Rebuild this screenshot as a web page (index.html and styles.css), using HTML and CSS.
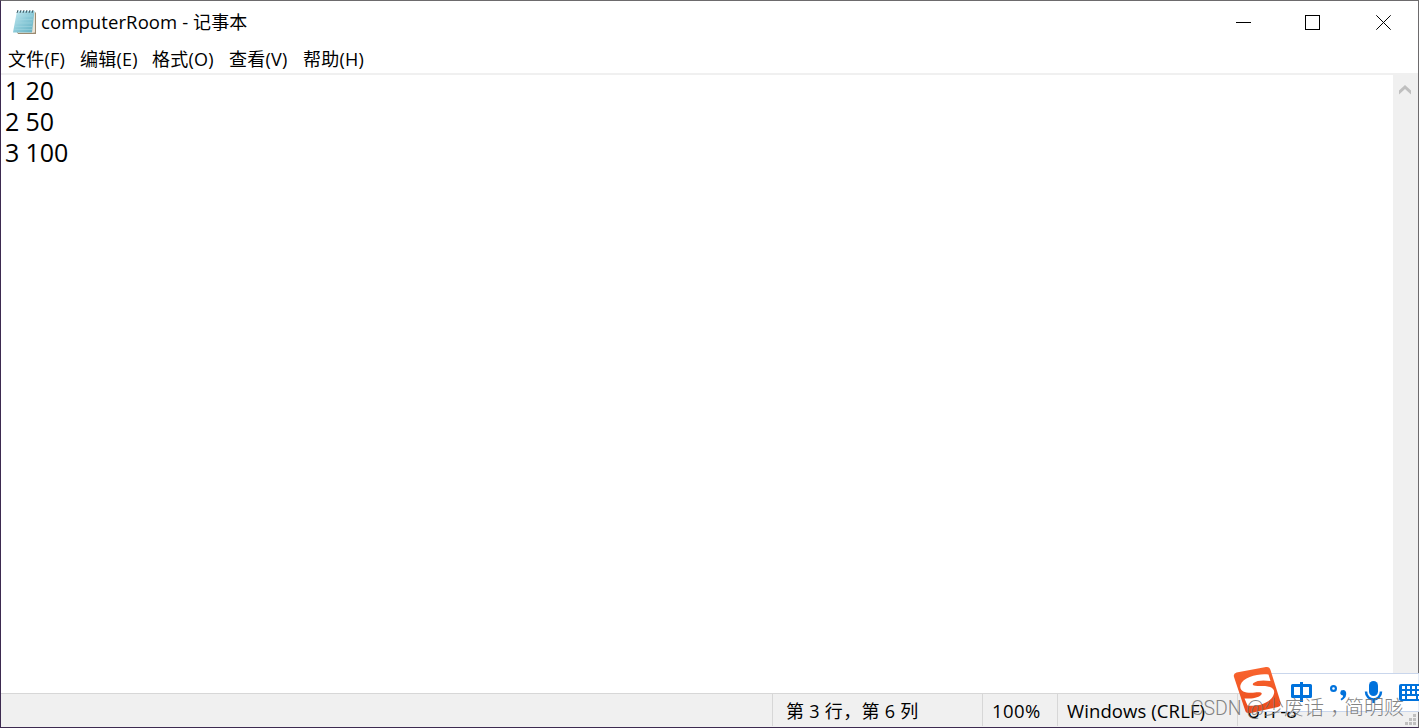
FILE: index.html
```html
<!DOCTYPE html>
<html lang="zh-CN">
<head>
    <meta charset="UTF-8">
    <meta name="viewport" content="width=device-width, initial-scale=1.0">
    <title>computerRoom - 记事本</title>
    <link rel="stylesheet" href="styles.css">
</head>
<body>
    <div class="window">
        <div class="title-bar">
            <svg class="app-icon" width="25" height="26" viewBox="0 0 25 26">
                <defs>
                    <linearGradient id="paper" x1="0" y1="0" x2="1" y2="1">
                        <stop offset="0" stop-color="#c9ebf2"/>
                        <stop offset="0.5" stop-color="#8dcbd9"/>
                        <stop offset="1" stop-color="#62afc1"/>
                    </linearGradient>
                </defs>
                <path d="M6 3.5H24V25H6L5 23Z" fill="#9b8a70"/>
                <path d="M6 3H23V23.5L20 24H6Z" fill="#e9e3d6"/>
                <path d="M5 2H22.5L20 23.5H1Z" fill="url(#paper)"/>
                <path d="M4.5 7H21M4 10.500H20.500M3.500 14H20M3 17.500H20M2.500 20.500H20" stroke="#a9d9e3" stroke-width="0.5"/>
                <path d="M6 1L5 4M9 1L8 4M12 1L11 4M15 1L14 4M18 1L17 4M21 1L20 4" stroke="#45606a" stroke-width="1"/>
            </svg>
            <span class="title"><span class="title-name">computerRoom -</span> 记事本</span>
            <div class="controls">
                <svg width="15" height="16" viewBox="0 0 15 16"><path d="M0 8.500H15" stroke="#000"/></svg>
                <svg width="15" height="16" viewBox="0 0 15 16"><rect x="0.500" y="1.500" width="14" height="14" fill="none" stroke="#000"/></svg>
                <svg width="15" height="16" viewBox="0 0 15 16"><path d="M0.300 1.300L14.700 15.700M14.700 1.300L0.300 15.700" stroke="#000"/></svg>
            </div>
        </div>
        <div class="menu">
            <span class="menu-file">文件(F)</span>
            <span class="menu-edit">编辑(E)</span>
            <span class="menu-format">格式(O)</span>
            <span class="menu-view">查看(V)</span>
            <span class="menu-help">帮助(H)</span>
        </div>
        <div class="editor">
            <pre class="text">1 20
2 50
3 100</pre>
            <div class="scrollbar">
                <svg width="12" height="10" viewBox="0 0 12 10"><path d="M0 5.500L6 0L12 5.500V9.500L6 4L0 9.500Z" fill="#bfbfbf"/></svg>
            </div>
        </div>
        <div class="status">
            <div class="cell position">第 3 行，第 6 列</div>
            <div class="cell zoom">100%</div>
            <div class="cell line-end">Windows (CRLF)</div>
            <div class="cell encoding">UTF-8</div>
        </div>
        <svg class="grip" width="12" height="12" viewBox="0 0 12 12">
            <path d="M8 0h3v3h-3zM4 4h3v3h-3zM8 4h3v3h-3zM0 8h3v3h-3zM4 8h3v3h-3zM8 8h3v3h-3z" fill="#bfbfbf"/>
        </svg>
    </div>

    <!-- input method bar -->
    <svg class="ime" width="187" height="50" viewBox="0 0 187 50">
        <defs>
            <linearGradient id="logo" x1="0" y1="0" x2="0" y2="1">
                <stop offset="0" stop-color="#f9652f"/>
                <stop offset="1" stop-color="#ea4b1c"/>
            </linearGradient>
        </defs>
        <path d="M20 7.500H187V45.500H20Z" fill="#fff" stroke="#c9d6ec"/>
        <path d="M4.500 6.500L34 1Q37.500 0.400 38.500 4L48.500 36Q49.500 40 46 41L19 47Q14 48 13 44L2 11Q1 7.500 4.500 6.500Z" fill="url(#logo)"/>
        <path d="M36.500 8.500C28 7 11 10.500 8.500 19C7 25.500 14 27.500 23 26.500C29 26 31 27 29 29C26 32 18 33 12.500 32.500L15.500 39.500C26 41 40 36.500 42 27.500C43.500 20.500 35 19.500 27 20C21.500 20.300 19.500 19 21.500 17C25 14 32 14 38.500 15Z" fill="#fff"/>
        <g fill="none" stroke="#0072dc" stroke-width="3">
            <path d="M60.500 19.500H78.500V30.500H60.500ZM69.500 16V36" stroke-linejoin="round"/>
            <circle cx="101.500" cy="22.500" r="2.400" stroke-width="2.200"/>
            <path d="M134 25.500C134 36 149 36 149 25.500M141.500 33V37" stroke-width="2.500"/>
        </g>
        <path d="M109 24.500Q113 23 114 26Q115.500 31 109.500 34.500L108.500 33Q111.500 31 111 29.500Q107 29 109 24.500Z" fill="#0072dc"/>
        <rect x="137" y="15" width="9" height="15" rx="4.500" fill="#0072dc"/>
        <rect x="167" y="18" width="25" height="17" rx="2" fill="#0072dc"/>
        <path d="M170 20h3v3h-3zM175 20h3v3h-3zM180 20h3v3h-3zM185 20h2v3h-2zM170 25h3v3h-3zM175 25h3v3h-3zM180 25h3v3h-3zM185 25h2v3h-2zM170 30h3v3h-3zM175 30h9v3h-9zM186 30h1v3h-1z" fill="#fff"/>
    </svg>
    <div class="watermark"><span class="site">CSDN @</span>少废话<span class="comma">，</span>简明赅</div>
</body>
</html>
```

FILE: styles.css
```css
* {
    box-sizing: border-box;
}
body {
    margin: 0;
    height: 728px;
    position: relative;
    overflow: hidden;
    font-family: "Open Sans", "Noto Sans CJK SC", sans-serif;
    font-size: 18px;
    color: #000;
    background: #fff;
}
.window {
    position: relative;
    display: flex;
    flex-direction: column;
    height: 728px;
    border: 1px solid #6d6b6d;
    border-left-color: #3d2a50;
    border-bottom-color: #3d2a50;
}
.title-bar {
    display: flex;
    align-items: center;
    height: 42px;
    padding: 0 27px 0 11px;
}
.app-icon {
    margin-right: 4px;
}
.title {
    line-height: 26px;
    letter-spacing: 0.1px;
    white-space: nowrap;
}
.title-name {
    font-size: 18.5px;
}
.controls {
    display: flex;
    gap: 54px;
    margin-left: auto;
}
.controls svg:last-child {
    margin-left: 2px;
}
.menu {
    display: flex;
    height: 32px;
    padding-left: 7px;
    border-bottom: 2px solid #f0f0f0;
    line-height: 33px;
    letter-spacing: 0.25px;
    white-space: nowrap;
}
.menu-file, .menu-edit {
    width: 72px;
}
.menu-format {
    width: 77px;
}
.menu-view {
    width: 74px;
}
.editor {
    display: flex;
    flex: 1;
}
.text {
    flex: 1;
    margin: 0;
    padding: 0 4px;
    font-family: "Open Sans", sans-serif;
    font-size: 25px;
    line-height: 31px;
    letter-spacing: -0.1px;
}
.scrollbar {
    width: 25px;
    margin-top: -2px;
    padding: 12px 0 0 6px;
    background: #f0f0f0;
    line-height: 0;
}
.status {
    display: flex;
    justify-content: flex-end;
    height: 34px;
    border-top: 1px solid #d7d7d7;
    background: #f0f0f0;
    line-height: 34px;
    white-space: nowrap;
}
.cell {
    height: 32px;
    border-left: 1px solid #d7d7d7;
}
.position {
    width: 210px;
    padding-left: 13px;
    letter-spacing: 0.3px;
}
.zoom {
    width: 75px;
    padding-left: 9px;
    font-size: 18.5px;
    letter-spacing: 0.4px;
}
.line-end {
    width: 180px;
    padding-left: 9px;
    font-size: 18.5px;
    letter-spacing: 0.1px;
}
.encoding {
    width: 181px;
    padding-left: 9px;
    font-size: 18.5px;
}
.grip {
    position: absolute;
    right: 1px;
    bottom: 1px;
}
.ime {
    position: absolute;
    left: 1232px;
    top: 666px;
}
.watermark {
    position: absolute;
    left: 1191px;
    top: 694px;
    font-family: "Liberation Sans", "Noto Sans CJK SC", sans-serif;
    font-weight: 300;
    font-size: 20px;
    line-height: 28px;
    white-space: nowrap;
    color: rgba(110, 110, 110, 0.85);
}
.site {
    font-family: Roboto, sans-serif;
    font-size: 19.5px;
    letter-spacing: -0.05px;
}
.comma {
    padding-left: 6px;
    margin-right: -6px;
}
```
